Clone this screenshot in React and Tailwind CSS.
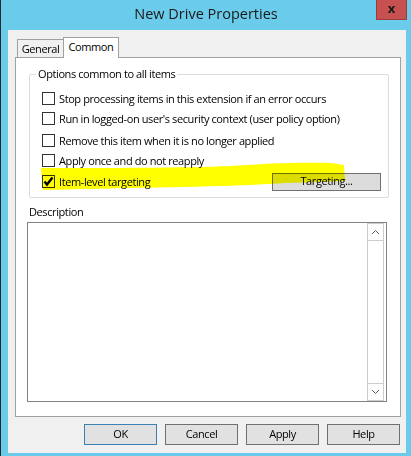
import { useState } from 'react'

const font = { fontFamily: '"Open Sans", "Noto Sans", sans-serif' }

export default function App() {
  const [checks, setChecks] = useState([false, false, false, false, true])

  const items = [
    { label: 'Stop processing items in this extension if an error occurs', mt: 'mt-[11px]' },
    { label: "Run in logged-on user's security context (user policy option)", mt: 'mt-[7px]' },
    { label: 'Remove this item when it is no longer applied', mt: 'mt-[9px]' },
    { label: 'Apply once and do not reapply', mt: 'mt-[7px]' },
    { label: 'Item-level targeting', mt: 'mt-[8px]', button: true },
  ]

  return (
    <div className="relative w-[411px] h-[456px] overflow-hidden bg-[#6acbea] border-l border-[#1e2a30] text-[11px] text-black" style={font}>
      {/* Title bar */}
      <div className="relative h-[30px] flex items-center justify-center">
        <span className="text-[14.5px] text-[#1a1a1a] -mt-[3px]">New Drive Properties</span>
        <div className="absolute right-[4px] top-0 w-[31px] h-[20px] bg-[#c75050] border border-t-0 border-[#9e3c3c] flex items-center justify-center">
          <span className="text-[13px] font-bold leading-none text-[#1a1a1a] -mt-[2px]">x</span>
        </div>
      </div>

      {/* Client area */}
      <div className="ml-[7px] w-[398px] h-[423px] bg-[#f0f0f0] flex flex-col tracking-[-0.4px]">
        {/* Tabs */}
        <div className="flex items-end h-[27px] pl-[9px] pt-[7px]">
          <div className="w-[47px] h-[18px] border border-b-0 border-[#a0a0a0] bg-[#f0f0f0] flex items-center justify-center pt-[1px]">General</div>
          <div className="relative z-10 -mb-[1px] w-[56px] h-[21px] border border-b-0 border-[#a0a0a0] bg-white flex items-start justify-center pt-[1px] -ml-[1px]">Common</div>
        </div>

        {/* Tab panel */}
        <div className="ml-[7px] w-[386px] h-[360px] border border-[#a0a0a0] bg-white flex flex-col">
          {/* Group box */}
          <div className="relative mt-[16px] ml-[13px] w-[360px] h-[124px] border border-[#dcdcdc] rounded-[2px]">
            <span className="absolute left-[6px] -top-[9px] bg-white px-[2px] leading-[16px]">Options common to all items</span>
            <div className="flex flex-col pl-[12px] pt-[6px]">
              {items.map((it, i) => (
                <div key={i} className={`flex items-center h-[13px] ${it.mt}`}>
                  <button
                    onClick={() => setChecks(c => c.map((v, j) => (j === i ? !v : v)))}
                    className="w-[13px] h-[13px] border border-[#333333] bg-white flex items-center justify-center shrink-0"
                  >
                    {checks[i] && (
                      <svg width="11" height="11" viewBox="0 0 11 11">
                        <path d="M1.5 5.5 L4 8.5 L9.5 1.5" fill="none" stroke="#000" strokeWidth="2.4" />
                      </svg>
                    )}
                  </button>
                  <span className="ml-[4px] leading-none whitespace-nowrap">{it.label}</span>
                  {it.button && (
                    <div className="ml-auto mr-[7px] w-[109px] h-[18px] border border-[#707070] bg-[#dcdcdc] flex items-center justify-center">
                      Targeting...
                    </div>
                  )}
                </div>
              ))}
            </div>
          </div>

          {/* Description */}
          <div className="ml-[13px] mt-[7px] leading-[14px]">Description</div>
          <div className="ml-[11px] mt-[3px] w-[360px] h-[180px] border border-[#828282] bg-white flex justify-end pr-[2px]">
            <div className="w-[17px] h-full flex flex-col border border-[#cdcdcd]">
              <div className="h-[17px] border-b border-[#cdcdcd] flex items-center justify-center">
                <svg width="9" height="6" viewBox="0 0 9 6">
                  <path d="M1 5 L4.5 1.5 L8 5" fill="none" stroke="#606060" strokeWidth="1" />
                </svg>
              </div>
              <div className="flex-1" />
              <div className="h-[17px] border-t border-[#cdcdcd] flex items-center justify-center">
                <svg width="9" height="6" viewBox="0 0 9 6">
                  <path d="M1 1 L4.5 4.5 L8 1" fill="none" stroke="#606060" strokeWidth="1" />
                </svg>
              </div>
            </div>
          </div>
        </div>

        {/* Buttons */}
        <div className="flex justify-end gap-[8px] pr-[6px] mt-[7px]">
          {['OK', 'Cancel', 'Apply', 'Help'].map(b => (
            <div
              key={b}
              className={`w-[73px] h-[21px] border ${b === 'OK' ? 'border-[#3c7fb1]' : 'border-[#707070]'} bg-[#e1e1e1] flex items-center justify-center`}
            >
              {b}
            </div>
          ))}
        </div>
      </div>

      {/* Yellow highlighter stroke */}
      <svg className="absolute left-0 top-0 pointer-events-none mix-blend-multiply" width="411" height="456" viewBox="0 0 411 456">
        <path
          d="M40 168 C110 168 180 168 230 166 C270 163 300 162 330 163 L343 165 L344 181 C310 182 280 183 250 185 C200 187 120 188 42 190 Z"
          fill="#ffff00"
        />
      </svg>
    </div>
  )
}
